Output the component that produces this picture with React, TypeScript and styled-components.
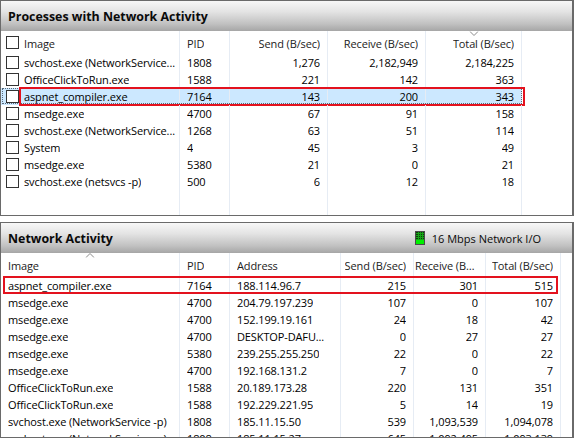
import styled, { createGlobalStyle } from "styled-components"

const GlobalStyle = createGlobalStyle`
    html, body {
        margin: 0;
        padding: 0;
        background: #ffffff;
    }
    body {
        font-family: "Open Sans", "Noto Sans", sans-serif;
        font-size: 11px;
        letter-spacing: -0.12px;
        color: #000000;
    }
`

type Align = "left" | "right"

interface Column {
    title: string
    width: number
    align: Align
    sort?: "up" | "down"
}

const topColumns: Column[] = [
    { title: "Image", width: 160, align: "left" },
    { title: "PID", width: 50, align: "left" },
    { title: "Send (B/sec)", width: 98, align: "right" },
    { title: "Receive (B/sec)", width: 98, align: "right" },
    { title: "Total (B/sec)", width: 96, align: "right", sort: "down" },
]

const bottomColumns: Column[] = [
    { title: "Image", width: 179, align: "left", sort: "up" },
    { title: "PID", width: 50, align: "left" },
    { title: "Address", width: 111, align: "left" },
    { title: "Send (B/sec)", width: 73, align: "right" },
    { title: "Receive (B/sec)", width: 72, align: "right" },
    { title: "Total (B/sec)", width: 75, align: "right" },
]

const topRows = [
    ["svchost.exe (NetworkService...", "1808", "1,276", "2,182,949", "2,184,225"],
    ["OfficeClickToRun.exe", "1588", "221", "142", "363"],
    ["aspnet_compiler.exe", "7164", "143", "200", "343"],
    ["msedge.exe", "4700", "67", "91", "158"],
    ["svchost.exe (NetworkService...", "1268", "63", "51", "114"],
    ["System", "4", "45", "3", "49"],
    ["msedge.exe", "5380", "21", "0", "21"],
    ["svchost.exe (netsvcs -p)", "500", "6", "12", "18"],
]

const bottomRows = [
    ["aspnet_compiler.exe", "7164", "188.114.96.7", "215", "301", "515"],
    ["msedge.exe", "4700", "204.79.197.239", "107", "0", "107"],
    ["msedge.exe", "4700", "152.199.19.161", "24", "18", "42"],
    ["msedge.exe", "4700", "DESKTOP-DAFU...", "0", "27", "27"],
    ["msedge.exe", "5380", "239.255.255.250", "22", "0", "22"],
    ["msedge.exe", "4700", "192.168.131.2", "7", "0", "7"],
    ["OfficeClickToRun.exe", "1588", "20.189.173.28", "220", "131", "351"],
    ["OfficeClickToRun.exe", "1588", "192.229.221.95", "5", "14", "19"],
    ["svchost.exe (NetworkService -p)", "1808", "185.11.15.50", "539", "1,093,539", "1,094,078"],
    ["svchost.exe (NetworkService -p)", "1808", "185.11.15.27", "645", "1,092,495", "1,093,139"],
]

const SortMark = ({ dir }: { dir: "up" | "down" }) => (
    <Chevron width="9" height="5" viewBox="0 0 9 5">
        <polyline
            points={dir === "down" ? "0.5,0.5 4.5,4.5 8.5,0.5" : "0.5,4.5 4.5,0.5 8.5,4.5"}
            fill="none"
            stroke="#8a8a8a"
            strokeWidth="1"
        />
    </Chevron>
)

const MeterIcon = () => (
    <svg width="10" height="14" viewBox="0 0 10 14">
        <rect x="0.5" y="0.5" width="9" height="13" fill="#0c3d0c" stroke="#4a4a4a" />
        {[2, 4, 6, 8].map((y) => (
            <line key={y} x1="1" x2="9" y1={y + 0.5} y2={y + 0.5} stroke="#16a516" strokeWidth="1" />
        ))}
        {[3, 5, 7].map((x) => (
            <line key={x} x1={x + 0.5} x2={x + 0.5} y1="1" y2="9" stroke="#16a516" strokeWidth="1" />
        ))}
        <rect x="1" y="9" width="8" height="4" fill="#00f000" />
    </svg>
)

function App() {
    const topCols = "19px " + topColumns.map((c) => c.width + "px").join(" ") + " 1fr"
    const bottomCols = bottomColumns.map((c) => c.width + "px").join(" ") + " 1fr"

    return (
        <>
            <GlobalStyle />
            <Page>
                <Panel $height={216}>
                    <PanelHeader>
                        <Title>Processes with Network Activity</Title>
                    </PanelHeader>
                    <Table>
                        <HeaderRow $cols={topCols} $height={23}>
                            <CheckCell>
                                <CheckBox />
                            </CheckCell>
                            {topColumns.map((c, j) => (
                                <HeadCell key={c.title} $align={c.align} $first={j === 0}>
                                    {c.sort && <SortMark dir={c.sort} />}
                                    <Label>{c.title}</Label>
                                </HeadCell>
                            ))}
                            <span />
                        </HeaderRow>
                        {topRows.map((r, i) => (
                            <Row key={i} $cols={topCols} $selected={i === 2}>
                                <CheckCell>
                                    <CheckBox />
                                </CheckCell>
                                {r.map((v, j) => (
                                    <Cell key={j} $align={topColumns[j].align} $first={j === 0}>
                                        <Label>{v}</Label>
                                    </Cell>
                                ))}
                                <span />
                                {i === 2 && (
                                    <>
                                        <Focus style={{ left: 1, width: 520 }} />
                                        <Marker style={{ left: 18, width: 506, top: -1, height: 19 }} />
                                    </>
                                )}
                            </Row>
                        ))}
                        <Filler $cols={topCols}>
                            <span />
                            {topColumns.map((c) => (
                                <Cell key={c.title} $align={c.align} />
                            ))}
                            <span />
                        </Filler>
                    </Table>
                </Panel>

                <Panel $height={216}>
                    <PanelHeader>
                        <Title>Network Activity</Title>
                        <Status>
                            <MeterIcon />
                            <span>16 Mbps Network I/O</span>
                        </Status>
                    </PanelHeader>
                    <Table>
                        <HeaderRow $cols={bottomCols} $height={24}>
                            {bottomColumns.map((c) => (
                                <HeadCell key={c.title} $align={c.align}>
                                    {c.sort && <SortMark dir={c.sort} />}
                                    <Label>{c.title}</Label>
                                </HeadCell>
                            ))}
                            <span />
                        </HeaderRow>
                        {bottomRows.map((r, i) => (
                            <Row key={i} $cols={bottomCols}>
                                {r.map((v, j) => (
                                    <Cell key={j} $align={bottomColumns[j].align}>
                                        <Label>{v}</Label>
                                    </Cell>
                                ))}
                                <span />
                                {i === 0 && <Marker style={{ left: 2, width: 555, top: -1, height: 18 }} />}
                            </Row>
                        ))}
                    </Table>
                </Panel>
            </Page>
        </>
    )
}

export default App

const Page = styled.div`
    width: 574px;
    height: 438px;
    display: flex;
    flex-direction: column;
    gap: 6px;
    overflow: hidden;
`

const Panel = styled.section<{ $height: number }>`
    height: ${(p) => p.$height}px;
    box-sizing: border-box;
    border: 1px solid #6a6a6a;
    border-right-width: 2px;
    display: flex;
    flex-direction: column;
    overflow: hidden;
    flex-shrink: 0;
`

const PanelHeader = styled.div`
    height: 30px;
    flex-shrink: 0;
    display: flex;
    align-items: center;
    justify-content: space-between;
    padding: 0 31px 0 7px;
    background: linear-gradient(#f7f7f7 0%, #e4e4e4 35%, #c2c2c2 75%, #a6a6a6 100%);
`

const Title = styled.h2`
    margin: 0;
    font-size: 12.4px;
    font-weight: 700;
    letter-spacing: 0;
    color: #0a0a0a;
    padding-top: 1px;
`

const Status = styled.div`
    display: flex;
    align-items: center;
    gap: 7px;
    font-size: 11px;
    letter-spacing: 0;
    color: #0a0a0a;
`

const Table = styled.div`
    flex: 1;
    display: flex;
    flex-direction: column;
    min-height: 0;
`

const Row = styled.div<{ $cols: string; $selected?: boolean }>`
    position: relative;
    display: grid;
    grid-template-columns: ${(p) => p.$cols};
    height: 17px;
    flex-shrink: 0;
    background: ${(p) => (p.$selected ? "linear-gradient(90deg, #cce8ff 0 521px, #ffffff 521px)" : "transparent")};
`

const HeaderRow = styled(Row)<{ $height: number }>`
    height: ${(p) => p.$height}px;
    color: #1b1b1b;
`

const Filler = styled(Row)`
    flex: 1;
    height: auto;
`

const Cell = styled.div<{ $align: Align; $first?: boolean }>`
    position: relative;
    display: flex;
    align-items: center;
    justify-content: ${(p) => (p.$align === "right" ? "flex-end" : "flex-start")};
    padding: ${(p) => (p.$align === "right" ? "0 7px 0 1px" : p.$first ? "0 2px 0 4px" : "0 7px")};
    min-width: 0;
    border-right: 1px solid #e6ecf4;
    white-space: nowrap;
    overflow: hidden;
`

const HeadCell = styled(Cell)`
    overflow: visible;
    padding-top: 1px;
`

const Label = styled.span`
    overflow: hidden;
    text-overflow: ellipsis;
    white-space: nowrap;
`

const CheckCell = styled.div`
    display: flex;
    align-items: center;
    padding-left: 5px;
`

const CheckBox = styled.span`
    display: block;
    width: 11px;
    height: 11px;
    border: 1px solid #333333;
    background: #ffffff;
`

const Chevron = styled.svg`
    position: absolute;
    top: 0;
    left: 50%;
    transform: translateX(-50%);
`

const Focus = styled.span`
    position: absolute;
    top: 0;
    height: 16px;
    border: 1px dotted #5a6a7a;
    box-sizing: border-box;
    pointer-events: none;
`

const Marker = styled.span`
    position: absolute;
    box-sizing: border-box;
    border: 2px solid #e3121e;
    pointer-events: none;
`
